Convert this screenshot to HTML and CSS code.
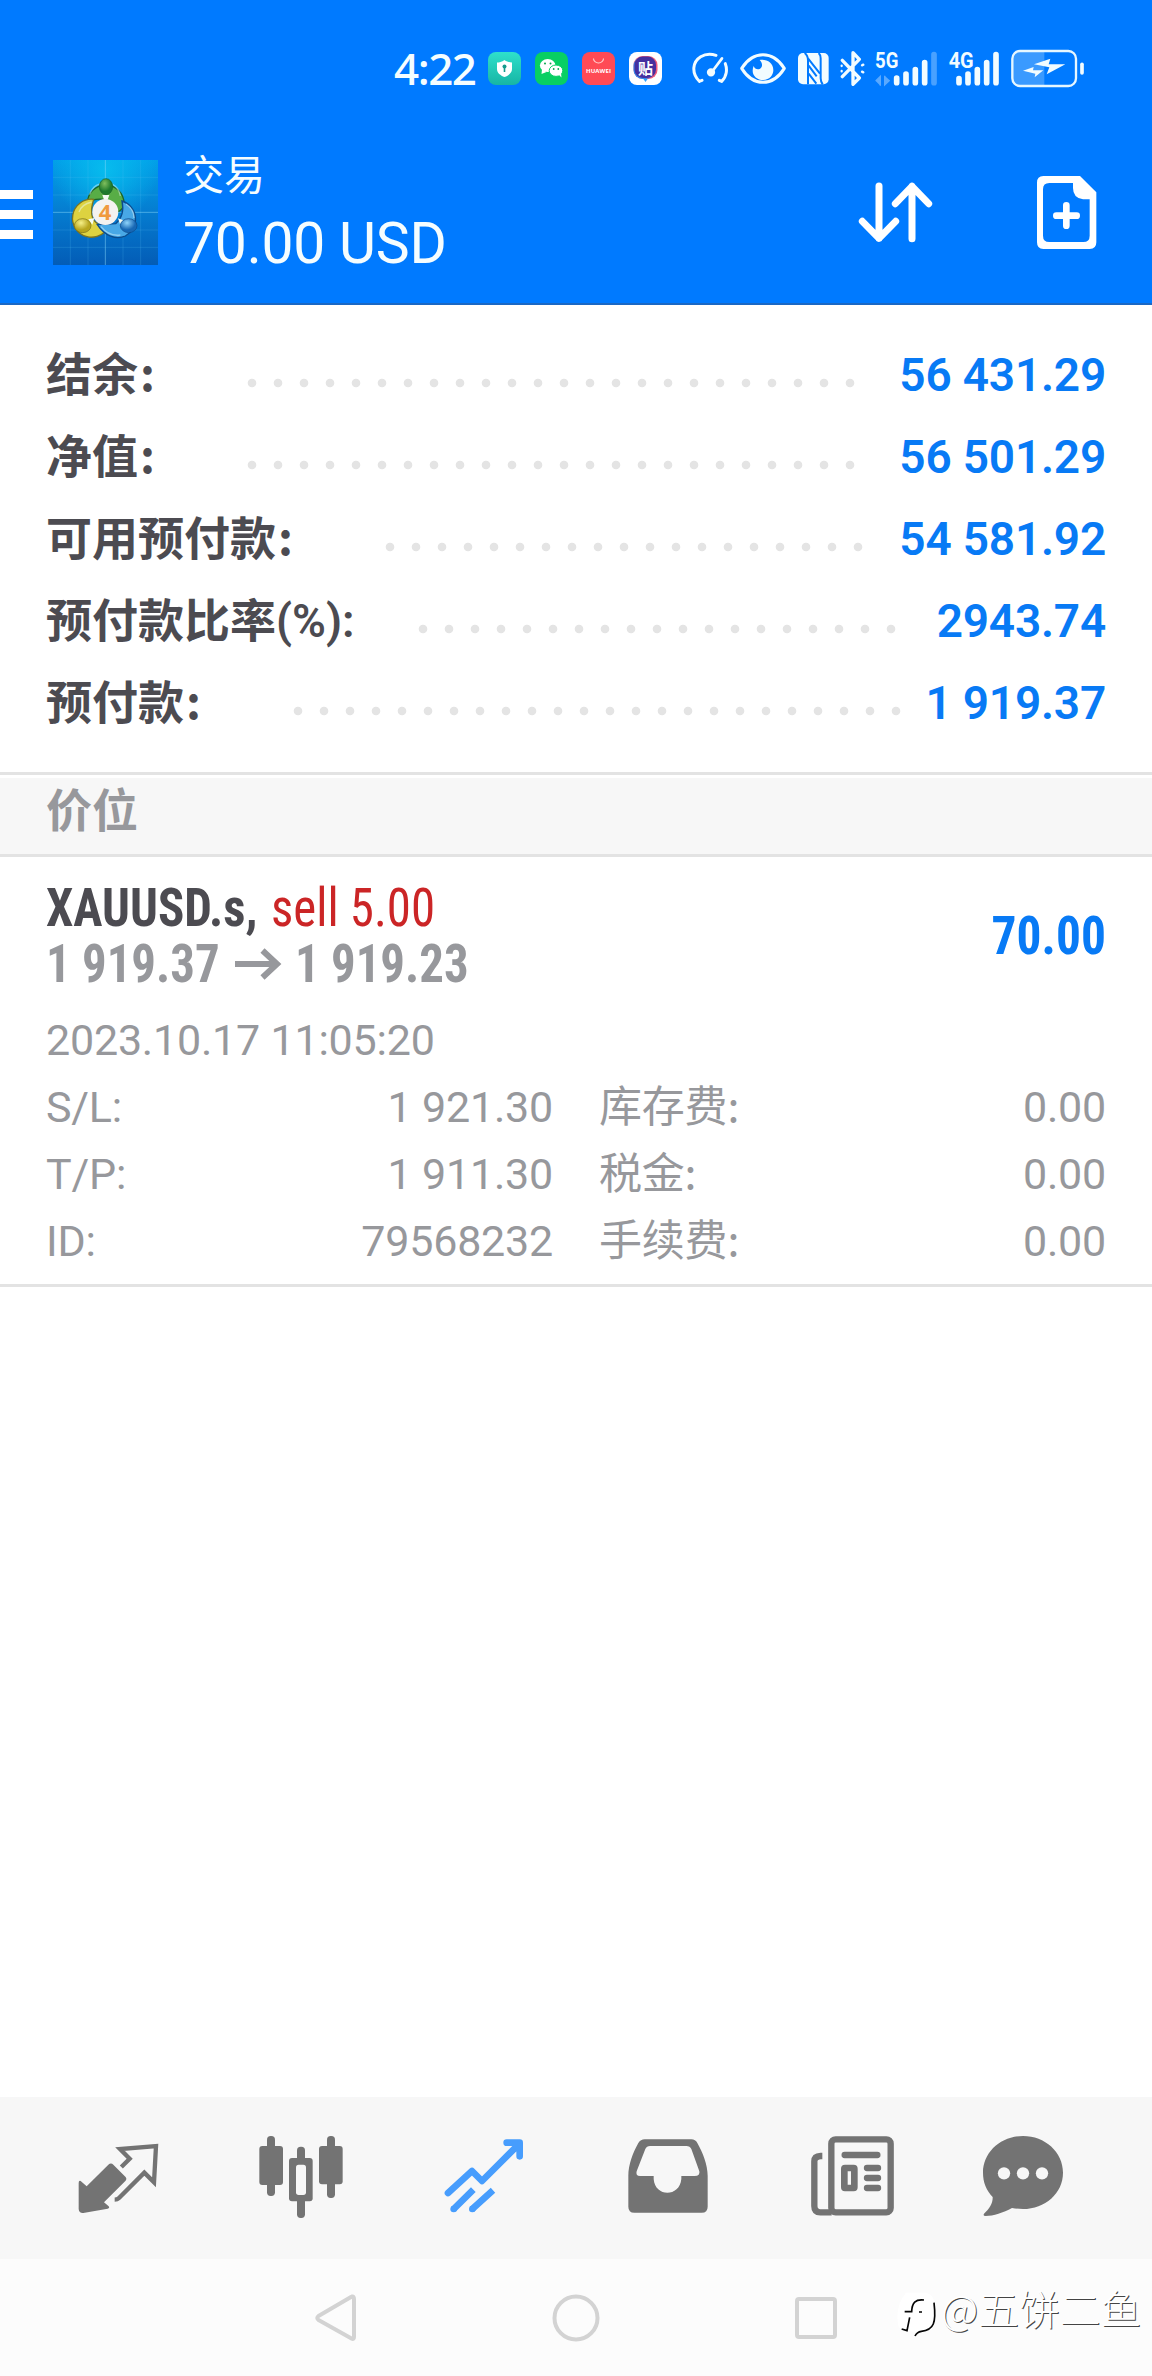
FILE: index.html
```html
<!DOCTYPE html>
<html lang="zh-CN">
<head>
<meta charset="utf-8">
<title>交易</title>
<link rel="stylesheet" href="styles.css">
</head>
<body>
<header class="header">
  <div class="status">
    <span class="clock">4:22</span>
    <svg class="app" viewBox="0 0 33 33"><defs><linearGradient id="g1" x2="0" y2="1"><stop stop-color="#2fe0cb"/><stop offset="1" stop-color="#17b5a4"/></linearGradient></defs><rect width="33" height="33" rx="8" fill="url(#g1)"/><path d="M16.500 8C14 10 11 10.500 9 10.500V17c0 4 3.500 6.500 7.500 8 4-1.500 7.500-4 7.500-8v-6.500c-2 0-5-.5-7.500-2.500z" fill="#fff"/><circle cx="16.500" cy="14.500" r="2" fill="#159a8c"/><path d="M16.500 14v6" stroke="#159a8c" stroke-width="1.600"/></svg>
    <svg class="app" viewBox="0 0 33 33"><rect width="33" height="33" rx="8" fill="#08cf63"/><ellipse cx="12.700" cy="13.500" rx="7.800" ry="6.500" fill="#fff"/><path d="M7 17l-.5 5 5-2z" fill="#fff"/><ellipse cx="21" cy="18.700" rx="6.800" ry="5.700" fill="#fff" stroke="#08cf63"/><path d="M24 23l2.500 2.500-.5-4z" fill="#fff"/><g fill="#08a850"><circle cx="10" cy="11.500" r="1"/><circle cx="15.500" cy="11.500" r="1"/><circle cx="18.700" cy="17" r=".9"/><circle cx="23.300" cy="17" r=".9"/></g></svg>
    <svg class="app" viewBox="0 0 33 33"><rect width="33" height="33" rx="8" fill="#ff4a55"/><path d="M11.500 6.500a5 4.500 0 0 0 10 0" fill="none" stroke="#ffd0d0" stroke-width="1.100"/><text x="16.500" y="21" class="huawei" text-anchor="middle" textLength="25">HUAWEI</text></svg>
    <svg class="app" viewBox="0 0 33 33"><rect width="33" height="33" rx="8" fill="#fff"/><path d="M13 25h7l-3.500 5z" fill="#2fa0ff"/><rect x="4.500" y="4" width="24" height="23" rx="9" fill="#f05a7a"/><rect x="4.500" y="5" width="21" height="22" rx="9" fill="#2f8cf0"/><rect x="5.500" y="4.500" width="21.500" height="21.500" rx="8.500" fill="#46309f"/><text x="16.500" y="21.500" class="tie" text-anchor="middle">贴</text></svg>
    <svg class="si gauge" viewBox="36 54 111 117" fill="none" stroke="#f2fcff" stroke-width="9" stroke-linecap="round"><path d="M58 151C33 125 38 92 62 77c15-9 32-9 46-4M136 98c6 16 5 38-11 53M58 151l8-3M125 151l-7-3"/><path d="M126 82L100 117" stroke-width="8"/><circle cx="93" cy="124" r="8" fill="#f2fcff"/></svg>
    <svg class="si eye" viewBox="180 54 138 117"><path d="M185 112c35-54 93-54 128 0-35 56-93 56-128 0z" fill="none" stroke="#f2fcff" stroke-width="9" stroke-linejoin="round"/><path d="M239 87c22-3 41 8 41 31 0 15-12 29-30 29s-32-12-32-28c0-5 1-10 3-14 3 8 10 12 18 9 9-4 10-17 0-27z" fill="#f2fcff"/></svg>
    <svg class="si nfc" viewBox="351 54 96 117"><rect x="354" y="66" width="92" height="94" rx="15" fill="#f2fcff"/><g fill="none" stroke="#007aff" stroke-width="6"><path d="M374 66q10 8 10 22v72M416 66q6 6 6 16v60q0 10 6 18"/><path d="M384 82l36 46M386 104l24 32M386 128l23 30"/></g></svg>
    <svg class="si bt" viewBox="480 54 75 117" fill="none" stroke="#f2fcff" stroke-width="10" stroke-linecap="round" stroke-linejoin="round"><path d="M487 88l51 53-19 19V65l19 20-51 52"/><path d="M546 103l4-2M546 122l4 2M485 104v1M485 120v1" stroke-width="7"/></svg>
    <svg class="si s5" viewBox="585 54 186 117"><text x="585" y="111" class="net" textLength="70" lengthAdjust="spacingAndGlyphs">5G</text><g stroke="#f2fcff" stroke-width="17" stroke-linecap="round"><path d="M650 141v14M678 129v26M706 116v39M734 95v60"/><path d="M762 71v84" opacity=".3"/></g><path d="M587 150l14-14v28M614 134v28l15-14" fill="#5aa9ff" stroke="#5aa9ff" stroke-width="4"/></svg>
    <svg class="si s4" viewBox="804 54 153 117"><text x="806" y="111" class="net" textLength="75" lengthAdjust="spacingAndGlyphs">4G</text><g stroke="#f2fcff" stroke-width="17" stroke-linecap="round"><path d="M837 143v12M864 129v26M892 116v39M920 95v60M948 71v84"/></g></svg>
    <svg class="si bat" viewBox="990 54 225 117"><path d="M1018 62h75v101h-75q-20 0-20-20V82q0-20 20-20z" fill="#3a9aff"/><rect x="997" y="60" width="191" height="105" rx="23" fill="none" stroke="#e6f7ff" stroke-width="7"/><path d="M1206 100v26" stroke="#f2fcff" stroke-width="11" stroke-linecap="round"/><path d="M1029 119l32-11-2 10h31l-26 21 2-11zM1062 100l49-17-5 17h50l-56 30 8-21z" fill="#f2fcff"/></svg>
  </div>
  <div class="appbar">
    <div class="menu"><i></i><i></i><i></i></div>
    <svg class="logo" viewBox="159 60 315 315">
      <defs>
        <linearGradient id="bg" x2="0" y2="1"><stop stop-color="#02a0e8"/><stop offset=".5" stop-color="#057cd0"/><stop offset="1" stop-color="#035cb6"/></linearGradient>
        <radialGradient id="gl" cx=".5" cy=".1" r=".5"><stop stop-color="#08c4f0" stop-opacity=".8"/><stop offset="1" stop-color="#08c8f4" stop-opacity="0"/></radialGradient>
        <radialGradient id="gr" cx=".4" cy=".3"><stop stop-color="#7fbe5d"/><stop offset="1" stop-color="#1f7a2c"/></radialGradient>
        <radialGradient id="ye" cx=".4" cy=".3"><stop stop-color="#f6f088"/><stop offset="1" stop-color="#b8a61d"/></radialGradient>
        <radialGradient id="bl" cx=".4" cy=".3"><stop stop-color="#8fd4fb"/><stop offset="1" stop-color="#1767b4"/></radialGradient>
      </defs>
      <path d="M159 60h315v315H159z" fill="url(#bg)"/><path d="M159 60h315v315H159z" fill="url(#gl)"/>
      <path d="M211 60v315M264 60v315M369 60v315M422 60v315M159 112h315M159 165h315M159 270h315M159 322h315" stroke="#5cc4f5" stroke-opacity=".3" stroke-width="2"/>
      <path d="M316 60v315M159 217h315" stroke="#8adafa" stroke-opacity=".5" stroke-width="3"/>
      <path d="M372 190a55 55 0 1 0-110 0c12-12 28-14 50-12l25 42c16 0 35-12 35-30z" fill="#58ad46" stroke="#1d6526" stroke-width="4"/>
      <path d="M281 178a57 57 0 0 0-20 112c20 5 42-2 56-16l-38-35c-8-24-4-40 2-61z" fill="#ddd240" stroke="#7d7420" stroke-width="4"/>
      <path d="M366 183a57 57 0 0 1 10 105c-28 12-62 0-84-34l55-3c20-17 25-40 19-68z" fill="#48a8e6" stroke="#0b4b8c" stroke-width="4"/>
      <path d="M269 164c8-26 30-36 50-36s38 16 42 40M237 216c6-18 20-26 38-30M378 192c16 10 24 24 24 42M303 260c16 20 36 28 58 25" fill="none" stroke="#eaffff" stroke-opacity=".45" stroke-width="4"/>
      <path d="M307 165h21l-5 14h-11zM265 238l18-4-6 20zM354 235l16 6-10 12z" fill="#f5fbf2"/>
      <ellipse cx="318" cy="140" rx="20" ry="24" fill="url(#gr)" stroke="#1d5f25" stroke-width="2"/>
      <ellipse cx="248" cy="257" rx="25" ry="21" fill="url(#ye)" stroke="#766c18" stroke-width="2"/>
      <ellipse cx="386" cy="257" rx="25" ry="21" fill="url(#bl)" stroke="#0c4889" stroke-width="2"/>
      <circle cx="316" cy="216" r="39" fill="#f4f2f0"/>
      <text x="315" y="240" class="four" text-anchor="middle">4</text>
    </svg>
    <div class="titles"><div class="t1">交易</div><div class="t2">70.00 USD</div></div>
    <svg class="sort" viewBox="114 105 225 225" fill="none" stroke="#fff" stroke-width="21" stroke-linecap="round" stroke-linejoin="round"><path d="M177 138v157M127 244l50 51 50-51M276 296V139M226 191l50-52 50 52"/></svg>
    <svg class="doc" viewBox="648 105 183 225"><path fill-rule="evenodd" fill="#fff" d="M670 108h110l49 49v150q0 20-20 20H670q-19 0-19-20V128q0-20 19-20zM688 129q-19 0-19 19v139q0 19 19 19h102q19 0 19-19V178h-20q-30-4-30-34v-15z"/><path d="M739 196v61M709 227h61" stroke="#fff" stroke-width="20" stroke-linecap="round"/></svg>
  </div>
</header>

<main class="main">
  <section class="summary">
    <div class="row short"><span class="label">结余<span class="colon">:</span></span><i class="dots"></i><span class="value">56 431.29</span></div>
    <div class="row short"><span class="label">净值<span class="colon">:</span></span><i class="dots"></i><span class="value">56 501.29</span></div>
    <div class="row free"><span class="label">可用预付款<span class="colon">:</span></span><i class="dots"></i><span class="value">54 581.92</span></div>
    <div class="row ratio"><span class="label">预付款比率(%):</span><i class="dots"></i><span class="value">2943.74</span></div>
    <div class="row used"><span class="label">预付款<span class="colon">:</span></span><i class="dots"></i><span class="value">1 919.37</span></div>
  </section>
  <h2 class="section">价位</h2>
  <section class="position">
    <div class="top">
      <div class="deal">
        <div class="line"><b class="symbol">XAUUSD.s,</b><span class="side">sell 5.00</span></div>
        <div class="line prices"><b class="price">1 919.37</b><svg class="arrow" viewBox="0 0 47 32" fill="none" stroke="#97989c" stroke-width="6"><path d="M0 16h42M27.500 2.500L42 16 27.500 29.500"/></svg><b class="price">1 919.23</b></div>
      </div>
      <b class="profit">70.00</b>
    </div>
    <div class="details">
      <div class="date">2023.10.17 11:05:20</div>
      <span>S/L:</span><span class="num">1 921.30</span><span class="second">库存费<span class="colon">:</span></span><span class="num">0.00</span>
      <span>T/P:</span><span class="num">1 911.30</span><span class="second">税金<span class="colon">:</span></span><span class="num">0.00</span>
      <span>ID:</span><span class="num">79568232</span><span class="second">手续费<span class="colon">:</span></span><span class="num">0.00</span>
    </div>
  </section>
</main>

<nav class="tabs">
  <svg class="quotes" viewBox="84 165 243 252" fill="#737373"><path d="M92 303l18 16 65-65q8-7 15 0l36 36q6 6 0 13l-64 64 14 12q4 5-3 7l-73 13q-13 1-14-12V309q0-8 6-6z"/><path d="M214 261l25-25-29-29 108-9-6 109-29-29-76 76q-5 5-13 5" fill="none" stroke="#737373" stroke-width="13"/></svg>
  <svg class="charts" viewBox="627 165 252 252" fill="#737373"><rect x="651" y="168" width="24" height="180" rx="11"/><rect x="628" y="198" width="71" height="117" rx="9"/><rect x="831" y="168" width="24" height="186" rx="11"/><rect x="807" y="198" width="71" height="115" rx="9"/><rect x="741" y="200" width="24" height="214" rx="11"/><rect x="717" y="234" width="71" height="130" rx="9"/><rect x="738" y="254" width="30" height="91" rx="8" fill="#f7f7f7"/></svg>
  <svg class="trade" viewBox="1182 165 240 252" fill="none" stroke="#479dfd" stroke-width="20" stroke-linejoin="round"><path d="M1194 339l72-66 30 30 110-110M1370 188h39v41" stroke-linecap="round"/><path d="M1210 388l60-59M1266 388l63-57"/><circle cx="1211" cy="387" r="10" fill="#479dfd" stroke="none"/><circle cx="1267" cy="387" r="10" fill="#479dfd" stroke="none"/></svg>
  <svg class="inbox" viewBox="144 165 240 252"><path fill-rule="evenodd" fill="#737373" d="M194 178h140q12 0 18 11c16 28 31 65 31 98v93q0 18-18 18H163q-18 0-18-18v-93c0-33 14-70 30-98q7-11 19-11zM210 198q-10 0-14 9l-26 67q-4 14 10 14h41v9c4 55 78 55 83 0v-9h40q17 0 14-14l-24-67q-4-9-15-9z"/></svg>
  <svg class="news" viewBox="693 165 249 252" fill="none" stroke="#737373" stroke-width="19"><rect x="754" y="178" width="178" height="219" rx="13"/><path d="M727 228h-5q-19 1-19 16v134q0 19 18 19h34"/><path d="M794 225h98" stroke-linecap="round"/><path d="M861 264h33M861 294h33M861 324h33" stroke-linecap="round"/><rect x="793" y="264" width="30" height="60" rx="2" stroke-width="20"/></svg>
  <svg class="chat" viewBox="1209 165 240 252"><path d="M1329 168c66 0 120 48 120 110s-54 109-120 109q-17 0-33-3c-26 14-56 24-79 24q-9 0-5-7c17-15 27-32 26-50-19-20-29-44-29-73 0-62 54-110 120-110z" fill="#737373"/><g fill="#f7f7f7"><circle cx="1272" cy="280" r="18.500"/><circle cx="1329" cy="280" r="18.500"/><circle cx="1386" cy="280" r="18.500"/></g></svg>
</nav>

<footer class="sysnav">
  <svg class="back" viewBox="0 0 42 48" fill="none" stroke="#d3d3d3" stroke-width="4" stroke-linejoin="round"><path d="M37 2.500Q39 2 39 5v38q0 3-2.500 1.500L3.500 26Q1 24 3.500 22L36 3z"/></svg>
  <svg class="home" viewBox="0 0 48 48" fill="none" stroke="#d3d3d3" stroke-width="4"><circle cx="24" cy="24" r="21.500"/></svg>
  <svg class="recent" viewBox="0 0 42 42" fill="none" stroke="#d3d3d3" stroke-width="4"><rect x="2" y="2" width="38" height="38" rx="2"/></svg>
  <div class="mark">
    <svg class="fish" viewBox="45 120 126 147"><path d="M78 128h60q28 8 28 48 0 55-42 68-40 5-68-12-14-60 22-104z" fill="#fff"/><path d="M132 150c-26-3-36 8-37 35H74M89 202l-8 40-16-5M117 186h9M162 158c7 60 0 82-38 86q-13 2-19 14" fill="none" stroke="#050505" stroke-width="5"/></svg>
    <span>@五饼二鱼</span>
  </div>
</footer>
</body>
</html>
```
FILE: styles.css
```css
* { box-sizing: border-box; }
body {
  margin: 0;
  width: 1152px;
  height: 2376px;
  display: flex;
  flex-direction: column;
  background: #fff;
  color: #4c4b51;
  font-family: Roboto, "Noto Sans CJK SC", sans-serif;
  overflow: hidden;
}
svg { display: block; flex: none; }

.header {
  height: 305px;
  background: #007aff;
  color: #f5fdff;
  border-bottom: 2px solid #1b68c4;
}
.status {
  height: 120px;
  padding: 16px 0 0 394px;
  display: flex;
  align-items: center;
}
.clock {
  width: 94px;
  font: 500 44px/50px "Noto Sans", sans-serif;
  letter-spacing: -1.500px;
}
.app { width: 33px; height: 33px; margin: 1px 14px 0 0; }
.si { height: 39px; }
.huawei { font: 700 6px "Open Sans", sans-serif; fill: #fff; }
.tie { font: 700 15px "Noto Sans CJK SC", sans-serif; fill: #fff; }
.net { font: 700 66px Roboto, sans-serif; fill: #f2fcff; }
.four { font: 700 66px "Open Sans", sans-serif; fill: #f09a3e; }
.gauge { width: 37px; margin-left: 16px; }
.eye { width: 46px; margin-left: 11px; }
.nfc { width: 32px; margin-left: 11px; }
.bt { width: 25px; margin-left: 11px; }
.s5 { width: 62px; margin-left: 10px; }
.s4 { width: 51px; margin-left: 11px; }
.bat { width: 75px; margin-left: 11px; }

.appbar { height: 185px; display: flex; align-items: center; }
.menu {
  width: 33px;
  margin-top: 4px;
  display: flex;
  flex-direction: column;
  gap: 11px;
}
.menu i { height: 9px; background: #fff; }
.logo { width: 105px; height: 105px; margin-left: 20px; }
.titles { width: 675px; margin: 4px 0 0 25px; }
.t1 { font-size: 41px; line-height: 58px; }
.t2 { font-size: 57px; line-height: 77px; letter-spacing: -0.200px; }
.sort { width: 75px; height: 75px; }
.doc { width: 61px; height: 75px; margin-left: 103px; }

.main { height: 1792px; }
.summary {
  height: 470px;
  padding: 29px 46px 0;
  border-bottom: 3px solid #e3e3e3;
}
.row {
  height: 82px;
  display: flex;
  align-items: center;
  font-size: 46px;
  font-weight: 600;
  white-space: nowrap;
}
.label, .value { line-height: 82px; }
.value { margin-left: auto; color: #087af5; letter-spacing: -0.200px; }
.colon { font-family: "Noto Sans CJK SC", sans-serif; line-height: 1; }
.label .colon { margin-left: 2px; }
.dots {
  flex: none;
  height: 10px;
  margin-top: 15px;
  background: radial-gradient(circle at 13px 5px, #e4e4e4 3.800px, transparent 4.700px) 0 0 / 26px 10px;
}
.short .label { width: 193px; }
.short .dots { width: 624px; }
.free .label { width: 331px; }
.free .dots { width: 494px; }
.ratio .label { width: 364px; }
.ratio .dots { width: 494px; }
.used .label { width: 239px; }
.used .dots { width: 624px; }

.section {
  height: 79px;
  margin: 3px 0 0;
  padding-left: 46px;
  background: #f7f7f7;
  border-bottom: 3px solid #e3e3e3;
  color: #97989c;
  font-size: 46px;
  font-weight: 600;
  line-height: 66px;
}

.position {
  height: 430px;
  padding: 23px 46px 0;
  border-bottom: 3px solid #e3e3e3;
}
.top { display: flex; justify-content: space-between; }
.line {
  display: flex;
  height: 56px;
  font-size: 54px;
  line-height: 56px;
  font-stretch: 75%;
  white-space: nowrap;
}
.line b, .side { transform: scaleX(0.905); transform-origin: left; }
.symbol { width: 225px; }
.side { color: #cb2526; }
.prices { color: #97989c; align-items: center; }
.price { width: 176px; }
.arrow { width: 47px; height: 32px; margin: 0 13px; }
.profit {
  font-size: 54px;
  line-height: 56px;
  margin-top: 28px;
  font-stretch: 75%;
  color: #087af5;
  transform: scaleX(0.915);
  transform-origin: right;
}
.details {
  margin-top: 15px;
  display: grid;
  grid-template-columns: 150px 357px 250px 1fr;
  grid-auto-rows: 67px;
  font-size: 43px;
  line-height: 67px;
  letter-spacing: -0.200px;
  color: #97989c;
}
.date { grid-column: 1 / -1; }
.num { text-align: right; }
.second { padding-left: 46px; }

.tabs {
  height: 162px;
  padding: 0 0 3px 78px;
  background: #f7f7f7;
  display: flex;
  align-items: center;
}
.tabs svg { height: 84px; }
.quotes { width: 81px; }
.charts { width: 84px; margin-left: 100px; }
.trade { width: 80px; margin-left: 101px; }
.inbox { width: 80px; margin-left: 104px; }
.news { width: 83px; margin-left: 103px; }
.chat { width: 80px; margin-left: 89px; }

.sysnav {
  height: 117px;
  padding-left: 315px;
  background: #fcfcfc;
  display: flex;
  align-items: center;
}
.back { width: 42px; height: 48px; }
.home { width: 48px; height: 48px; margin-left: 195px; }
.recent { width: 42px; height: 42px; margin-left: 195px; }
.mark {
  margin: -19px 0 0 58px;
  display: flex;
  align-items: center;
  white-space: nowrap;
  font: 300 40.800px/60px "Noto Sans CJK SC", sans-serif;
  color: #fff;
  text-shadow: 1px 1px 0.500px #444;
}
.fish { width: 42px; height: 49px; margin: 12px 4px 0 0; }
```
